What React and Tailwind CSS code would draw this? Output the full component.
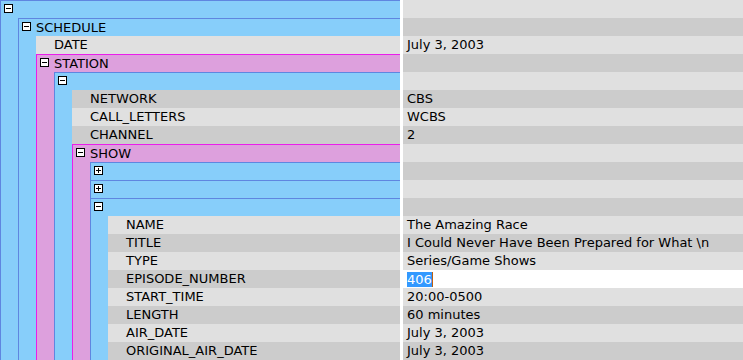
import React from "react";

function Toggle({ open }) {
  return (
    <svg width="9" height="9" viewBox="0 0 9 9" shapeRendering="crispEdges" className="block">
      <rect x="0.5" y="0.5" width="8" height="8" fill="#fff" stroke="#000" strokeWidth="1" />
      <rect x="2" y="4" width="5" height="1" fill="#000" />
      {!open && <rect x="4" y="2" width="1" height="5" fill="#000" />}
    </svg>
  );
}

function Box({ kind, open = true, label, children }) {
  const cls =
    kind === "pink"
      ? "border-t border-l border-[#ea1eea] bg-[#dda0dd]"
      : "border-t border-l border-[#5f86e0] bg-[#87cefa]";
  return (
    <div className={cls}>
      <div className="flex h-[17px]">
        <div className="w-[17px] pl-[3px] pt-[3px]">
          <Toggle open={open} />
        </div>
        <div className="leading-[17px]">{label}</div>
      </div>
      {children && <div className="pl-[17px]">{children}</div>}
    </div>
  );
}

function Leaf({ label, idx }) {
  const bg = idx % 2 === 0 ? "bg-[#e0e0e0]" : "bg-[#cccccc]";
  return <div className={`h-[18px] pl-[18px] leading-[18px] whitespace-nowrap ${bg}`}>{label}</div>;
}

const values = [
  "",
  "",
  "July 3, 2003",
  "",
  "",
  "CBS",
  "WCBS",
  "2",
  "",
  "",
  "",
  "",
  "The Amazing Race",
  "I Could Never Have Been Prepared for What \\n",
  "Series/Game Shows",
  "406",
  "20:00-0500",
  "60 minutes",
  "July 3, 2003",
  "July 3, 2003",
];

export default function App() {
  return (
    <div
      className="flex h-[360px] w-[743px] overflow-hidden bg-white text-[13px] text-black"
      style={{ fontFamily: '"DejaVu Sans", Verdana, sans-serif' }}
    >
      <div className="w-[400px] shrink-0">
        <Box kind="blue">
          <Box kind="blue" label="SCHEDULE">
            <Leaf label="DATE" idx={2} />
            <Box kind="pink" label="STATION">
              <Box kind="blue">
                <Leaf label="NETWORK" idx={5} />
                <Leaf label="CALL_LETTERS" idx={6} />
                <Leaf label="CHANNEL" idx={7} />
                <Box kind="pink" label="SHOW">
                  <Box kind="blue" open={false} />
                  <Box kind="blue" open={false} />
                  <Box kind="blue">
                    <Leaf label="NAME" idx={12} />
                    <Leaf label="TITLE" idx={13} />
                    <Leaf label="TYPE" idx={14} />
                    <Leaf label="EPISODE_NUMBER" idx={15} />
                    <Leaf label="START_TIME" idx={16} />
                    <Leaf label="LENGTH" idx={17} />
                    <Leaf label="AIR_DATE" idx={18} />
                    <Leaf label="ORIGINAL_AIR_DATE" idx={19} />
                    <Leaf label="" idx={20} />
                  </Box>
                </Box>
              </Box>
            </Box>
          </Box>
        </Box>
      </div>
      <div className="w-[3px] shrink-0 bg-white" />
      <div className="flex-1 min-w-0">
        {values.map((v, i) => {
          if (i === 15) {
            return (
              <div key={i} className="flex h-[18px] items-center bg-white pl-[4px]">
                <span className="h-[15px] bg-[#3399ff] leading-[15px] text-white">{v}</span>
                <span className="h-[15px] w-[1px] bg-[#c06010]" />
              </div>
            );
          }
          const bg = i % 2 === 0 ? "bg-[#e0e0e0]" : "bg-[#cccccc]";
          return (
            <div key={i} className={`h-[18px] pl-[4px] leading-[18px] whitespace-nowrap ${bg}`}>
              {v}
            </div>
          );
        })}
      </div>
    </div>
  );
}
